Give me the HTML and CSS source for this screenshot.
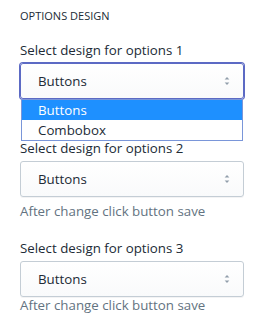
FILE: index.html
```html
<!DOCTYPE html>
<html lang="en">
<head>
    <meta charset="UTF-8">
    <meta name="viewport" content="width=device-width, initial-scale=1.0">
    <title>Options design</title>
    <link rel="stylesheet" href="styles.css">
</head>
<body>
    <div class="card">
        <h3 class="subheading">Options design</h3>

        <div class="field">
            <label class="label" for="design1">Select design for options 1</label>
            <div class="select is-focused">
                <span class="select-value">Buttons</span>
                <svg class="select-arrow" viewBox="0 0 20 20"><path d="M13 8l-3-3-3 3h6zm-.1 4L10 14.9 7.1 12h5.8z"/></svg>
                <ul class="dropdown">
                    <li class="option is-selected">Buttons</li>
                    <li class="option">Combobox</li>
                </ul>
            </div>
            <!-- hidden behind the open dropdown -->
            <p class="help is-covered">After change click button save</p>
        </div>

        <div class="field">
            <label class="label" for="design2">Select design for options 2</label>
            <div class="select">
                <span class="select-value">Buttons</span>
                <svg class="select-arrow" viewBox="0 0 20 20"><path d="M13 8l-3-3-3 3h6zm-.1 4L10 14.9 7.1 12h5.8z"/></svg>
            </div>
            <p class="help">After change click button save</p>
        </div>

        <div class="field">
            <label class="label" for="design3">Select design for options 3</label>
            <div class="select">
                <span class="select-value">Buttons</span>
                <svg class="select-arrow" viewBox="0 0 20 20"><path d="M13 8l-3-3-3 3h6zm-.1 4L10 14.9 7.1 12h5.8z"/></svg>
            </div>
            <p class="help is-tight">After change click button save</p>
        </div>
    </div>
</body>
</html>
```

FILE: styles.css
```css
body {
    font-family: 'Open Sans', 'Noto Sans', sans-serif;
    background-color: #fff;
    margin: 0;
    color: #212b36;
}
.card {
    padding: 6px 20px 0 20px;
}
.subheading {
    margin: 0 0 14px;
    font-size: 11px;
    line-height: 20px;
    font-weight: 400;
    text-transform: uppercase;
    color: #212b36;
}
.field {
    margin-bottom: 17px;
}
.label {
    display: block;
    font-size: 13.3px;
    line-height: 20px;
    margin-bottom: 3px;
}
.select {
    position: relative;
    height: 36px;
    box-sizing: border-box;
    display: flex;
    align-items: center;
    padding: 0 8px 0 17px;
    border: 1px solid #c4cdd5;
    border-radius: 3px;
    background: linear-gradient(180deg, #fff, #f9fafb);
    box-shadow: 0 1px 0 0 rgba(22,29,37,0.05);
}
.select.is-focused {
    border-color: #5c6ac4;
    box-shadow: 0 0 0 1px #5c6ac4;
}
.select-value {
    flex: 1;
    font-size: 13.3px;
}
.select-arrow {
    width: 16px;
    height: 16px;
    fill: #919eab;
}
.dropdown {
    position: absolute;
    top: 35px;
    left: 0;
    right: 0;
    margin: 0;
    padding: 0;
    list-style: none;
    background: #fff;
    border: 1px solid #7a96d9;
    z-index: 2;
}
.option {
    padding: 0 0 0 16px;
    font-size: 13.3px;
    line-height: 20px;
}
.option.is-selected {
    background: #1e90ff;
    color: #fff;
}
.help {
    margin: 4px 0 0;
    font-size: 13.3px;
    line-height: 20px;
    color: #637381;
}
.help.is-covered {
    visibility: hidden;
    margin-top: 2px;
}
.help.is-tight {
    margin-top: -2px;
}
```
